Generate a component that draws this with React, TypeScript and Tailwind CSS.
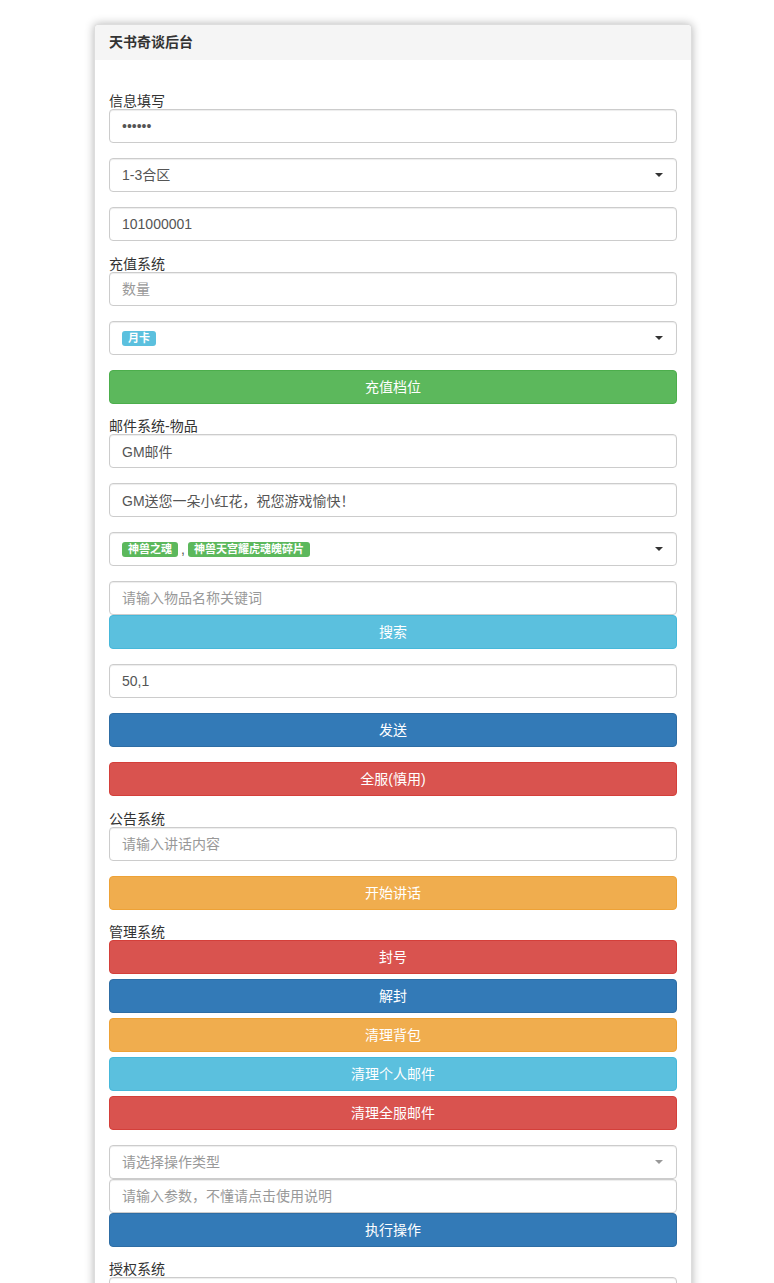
import type { ReactNode } from 'react';

const FONT = { fontFamily: '"Liberation Sans", "Noto Sans CJK SC", sans-serif' };

const BTN = {
  success: 'bg-[#5cb85c] border-[#4cae4c]',
  info: 'bg-[#5bc0de] border-[#46b8da]',
  primary: 'bg-[#337ab7] border-[#2e6da4]',
  danger: 'bg-[#d9534f] border-[#d43f3a]',
  warning: 'bg-[#f0ad4e] border-[#eea236]',
};

function Label({ children, tight }: { children: ReactNode; tight?: boolean }) {
  return (
    <div className={`text-sm text-[#333] ${tight ? 'h-[15px] leading-[15px]' : 'h-4 leading-4'}`}>{children}</div>
  );
}

function Field({ value, placeholder, type = 'text' }: { value?: string; placeholder?: string; type?: string }) {
  return (
    <input
      type={type}
      defaultValue={value}
      placeholder={placeholder}
      className="block h-[34px] w-full rounded border border-[#ccc] bg-white px-3 text-sm text-[#555] shadow-[inset_0_1px_1px_rgba(0,0,0,0.075)] outline-none placeholder:text-[#999]"
    />
  );
}

function Caret({ muted }: { muted?: boolean }) {
  return (
    <span
      className={`ml-auto h-0 w-0 border-x-4 border-t-4 border-x-transparent ${muted ? 'border-t-[#999]' : 'border-t-[#333]'}`}
    />
  );
}

function Select({ children, muted }: { children: ReactNode; muted?: boolean }) {
  return (
    <div className="flex h-[34px] w-full items-center rounded border border-[#ccc] bg-white pl-3 pr-[13px] text-sm shadow-[inset_0_1px_1px_rgba(0,0,0,0.075)]">
      <div className="flex items-center">{children}</div>
      <Caret muted={muted} />
    </div>
  );
}

function Tag({ children, color }: { children: ReactNode; color: string }) {
  return (
    <span className={`rounded-[3px] px-[6px] py-[1px] text-[11px] font-bold leading-[13px] text-white ${color}`}>
      {children}
    </span>
  );
}

function Button({ children, kind }: { children: ReactNode; kind: keyof typeof BTN }) {
  return (
    <button className={`block h-[34px] w-full rounded border text-sm text-white ${BTN[kind]}`}>{children}</button>
  );
}

export default function App() {
  return (
    <div className="min-h-screen bg-white pt-6 pl-[94px]" style={FONT}>
      <div className="w-[598px] rounded-[4px] border border-[#ddd] bg-white shadow-[0_0_10px_rgba(0,0,0,0.3)]">
        <div className="rounded-t-[4px] border-b border-[#f5f5f5] bg-[#f5f5f5] px-[14px] py-[8px] text-sm font-bold leading-[18px] text-[#333]">
          天书奇谈后台
        </div>

        <div className="px-[14px] pb-[15px] pt-[33px]">
          <Label>信息填写</Label>
          <div className="mb-[15px]">
            <Field type="password" value="123456" />
          </div>
          <div className="mb-[15px]">
            <Select>
              <span className="text-[#555]">1-3合区</span>
            </Select>
          </div>
          <div className="mb-[15px]">
            <Field value="101000001" />
          </div>

          <Label>充值系统</Label>
          <div className="mb-[15px]">
            <Field placeholder="数量" />
          </div>
          <div className="mb-[15px]">
            <Select>
              <Tag color="bg-[#5bc0de]">月卡</Tag>
            </Select>
          </div>
          <div className="mb-[15px]">
            <Button kind="success">充值档位</Button>
          </div>

          <Label tight>邮件系统-物品</Label>
          <div className="mb-[15px]">
            <Field value="GM邮件" />
          </div>
          <div className="mb-[15px]">
            <Field value="GM送您一朵小红花，祝您游戏愉快！" />
          </div>
          <div className="mb-[15px]">
            <Select>
              <Tag color="bg-[#5cb85c]">神兽之魂</Tag>
              <span className="mx-[3px] text-[#555]">,</span>
              <Tag color="bg-[#5cb85c]">神兽天宫耀虎魂魄碎片</Tag>
            </Select>
          </div>
          <div className="mb-[15px]">
            <Field placeholder="请输入物品名称关键词" />
            <Button kind="info">搜索</Button>
          </div>
          <div className="mb-[15px]">
            <Field value="50,1" />
          </div>
          <div className="mb-[15px]">
            <Button kind="primary">发送</Button>
          </div>
          <div className="mb-[15px]">
            <Button kind="danger">全服(慎用)</Button>
          </div>

          <Label>公告系统</Label>
          <div className="mb-[15px]">
            <Field placeholder="请输入讲话内容" />
          </div>
          <div className="mb-[15px]">
            <Button kind="warning">开始讲话</Button>
          </div>

          <Label tight>管理系统</Label>
          <div className="mb-[15px] flex flex-col gap-[5px]">
            <Button kind="danger">封号</Button>
            <Button kind="primary">解封</Button>
            <Button kind="warning">清理背包</Button>
            <Button kind="info">清理个人邮件</Button>
            <Button kind="danger">清理全服邮件</Button>
          </div>
          <div className="mb-[15px]">
            <Select muted>
              <span className="text-[#999]">请选择操作类型</span>
            </Select>
            <Field placeholder="请输入参数，不懂请点击使用说明" />
            <Button kind="primary">执行操作</Button>
          </div>

          <Label tight>授权系统</Label>
          <div className="mb-[15px]">
            <Field placeholder="请输入授权账号" />
          </div>
          <div>
            <Button kind="success">授权</Button>
          </div>
        </div>
      </div>
    </div>
  );
}
